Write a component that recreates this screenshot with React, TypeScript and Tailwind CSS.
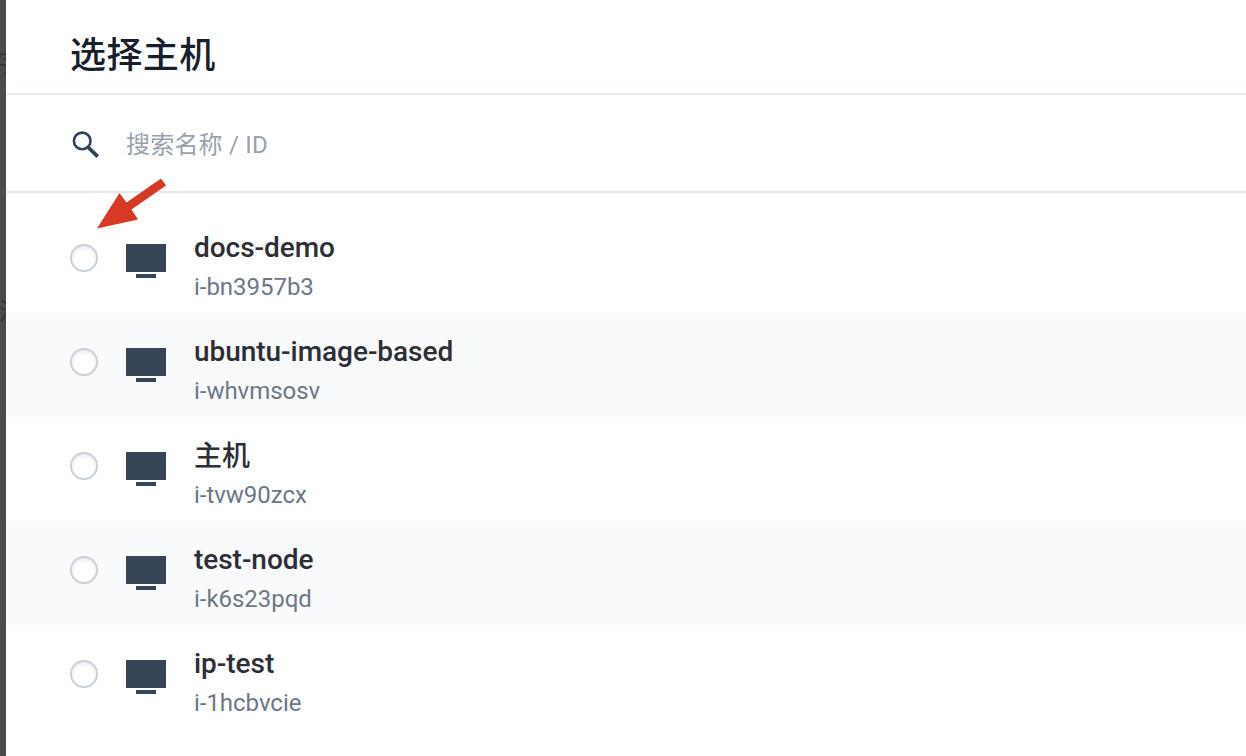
const hosts = [
  { name: "docs-demo", id: "i-bn3957b3" },
  { name: "ubuntu-image-based", id: "i-whvmsosv" },
  { name: "主机", id: "i-tvw90zcx", cjk: true },
  { name: "test-node", id: "i-k6s23pqd" },
  { name: "ip-test", id: "i-1hcbvcie" },
];

function SearchIcon() {
  return (
    <svg className="h-8 w-8 shrink-0" viewBox="0 0 32 32" fill="none">
      <circle cx="12.2" cy="13.9" r="8.3" stroke="#324558" strokeWidth="2.6" />
      <path d="M17.8 20 L27.8 29.6" stroke="#324558" strokeWidth="3.8" />
    </svg>
  );
}

function HostIcon() {
  return (
    <svg className="h-[34px] w-10 shrink-0" viewBox="0 0 40 34">
      <path d="M0 0H40V28H0ZM10 30H30V34H10Z" fill="#364656" />
    </svg>
  );
}

export default function App() {
  return (
    <div className="flex h-[756px] w-[1246px] overflow-hidden bg-white font-['Roboto','Noto_Sans_CJK_SC',sans-serif]">
      <aside className="relative w-1.5 shrink-0 overflow-hidden bg-[#4a4b4d] text-[24px] leading-6 text-[#303238]">
        <span className="absolute -left-[3px] top-[51px]">字</span>
        <span className="absolute -left-px top-[300px]">没</span>
      </aside>
      <main className="relative flex-1">
        <header className="flex h-[95px] items-center border-b-2 border-[#e5e9f0] pl-16 pt-[19px]">
          <h1 className="text-[36px] font-medium leading-[44px] tracking-[0.4px] text-[#17202a]">选择主机</h1>
        </header>
        <div className="flex h-[98px] items-center border-b-2 border-[#e5e9f0] pl-16">
          <SearchIcon />
          <span className="ml-6 pt-1 text-[24px] leading-9 tracking-[0.2px] text-[#98a1ad]">搜索名称 / ID</span>
        </div>
        <ul className="pt-4">
          {hosts.map((host) => (
            <li key={host.id} className="flex h-[104px] items-start pl-16 even:bg-[#f9fafc]">
              <span className="mt-[35px] h-7 w-7 shrink-0 rounded-full border-2 border-[#c8d0dc] bg-white shadow-[inset_0_2px_4px_rgba(0,0,0,0.08)]" />
              <div className="ml-7 pt-[35px]">
                <HostIcon />
              </div>
              <div className="ml-7 pt-[18px]">
                <div className={`h-10 text-[28px] font-medium tracking-[-0.04px] text-[#2d2e36] ${host.cjk ? "leading-[44px]" : "leading-[42px]"}`}>
                  {host.name}
                </div>
                <div className="h-10 text-[24px] leading-[40px] tracking-[-0.03px] text-[#6b7886]">{host.id}</div>
              </div>
            </li>
          ))}
        </ul>
        <svg className="absolute left-[91px] top-[178px] h-[52px] w-[70px]" viewBox="97 178 70 52">
          <path d="M97 228.5 L119.5 193 L126.5 202.5 L161 178.5 L166 185.5 L131.5 209.5 L138 219.5Z" fill="#d63a24" />
        </svg>
      </main>
    </div>
  );
}
